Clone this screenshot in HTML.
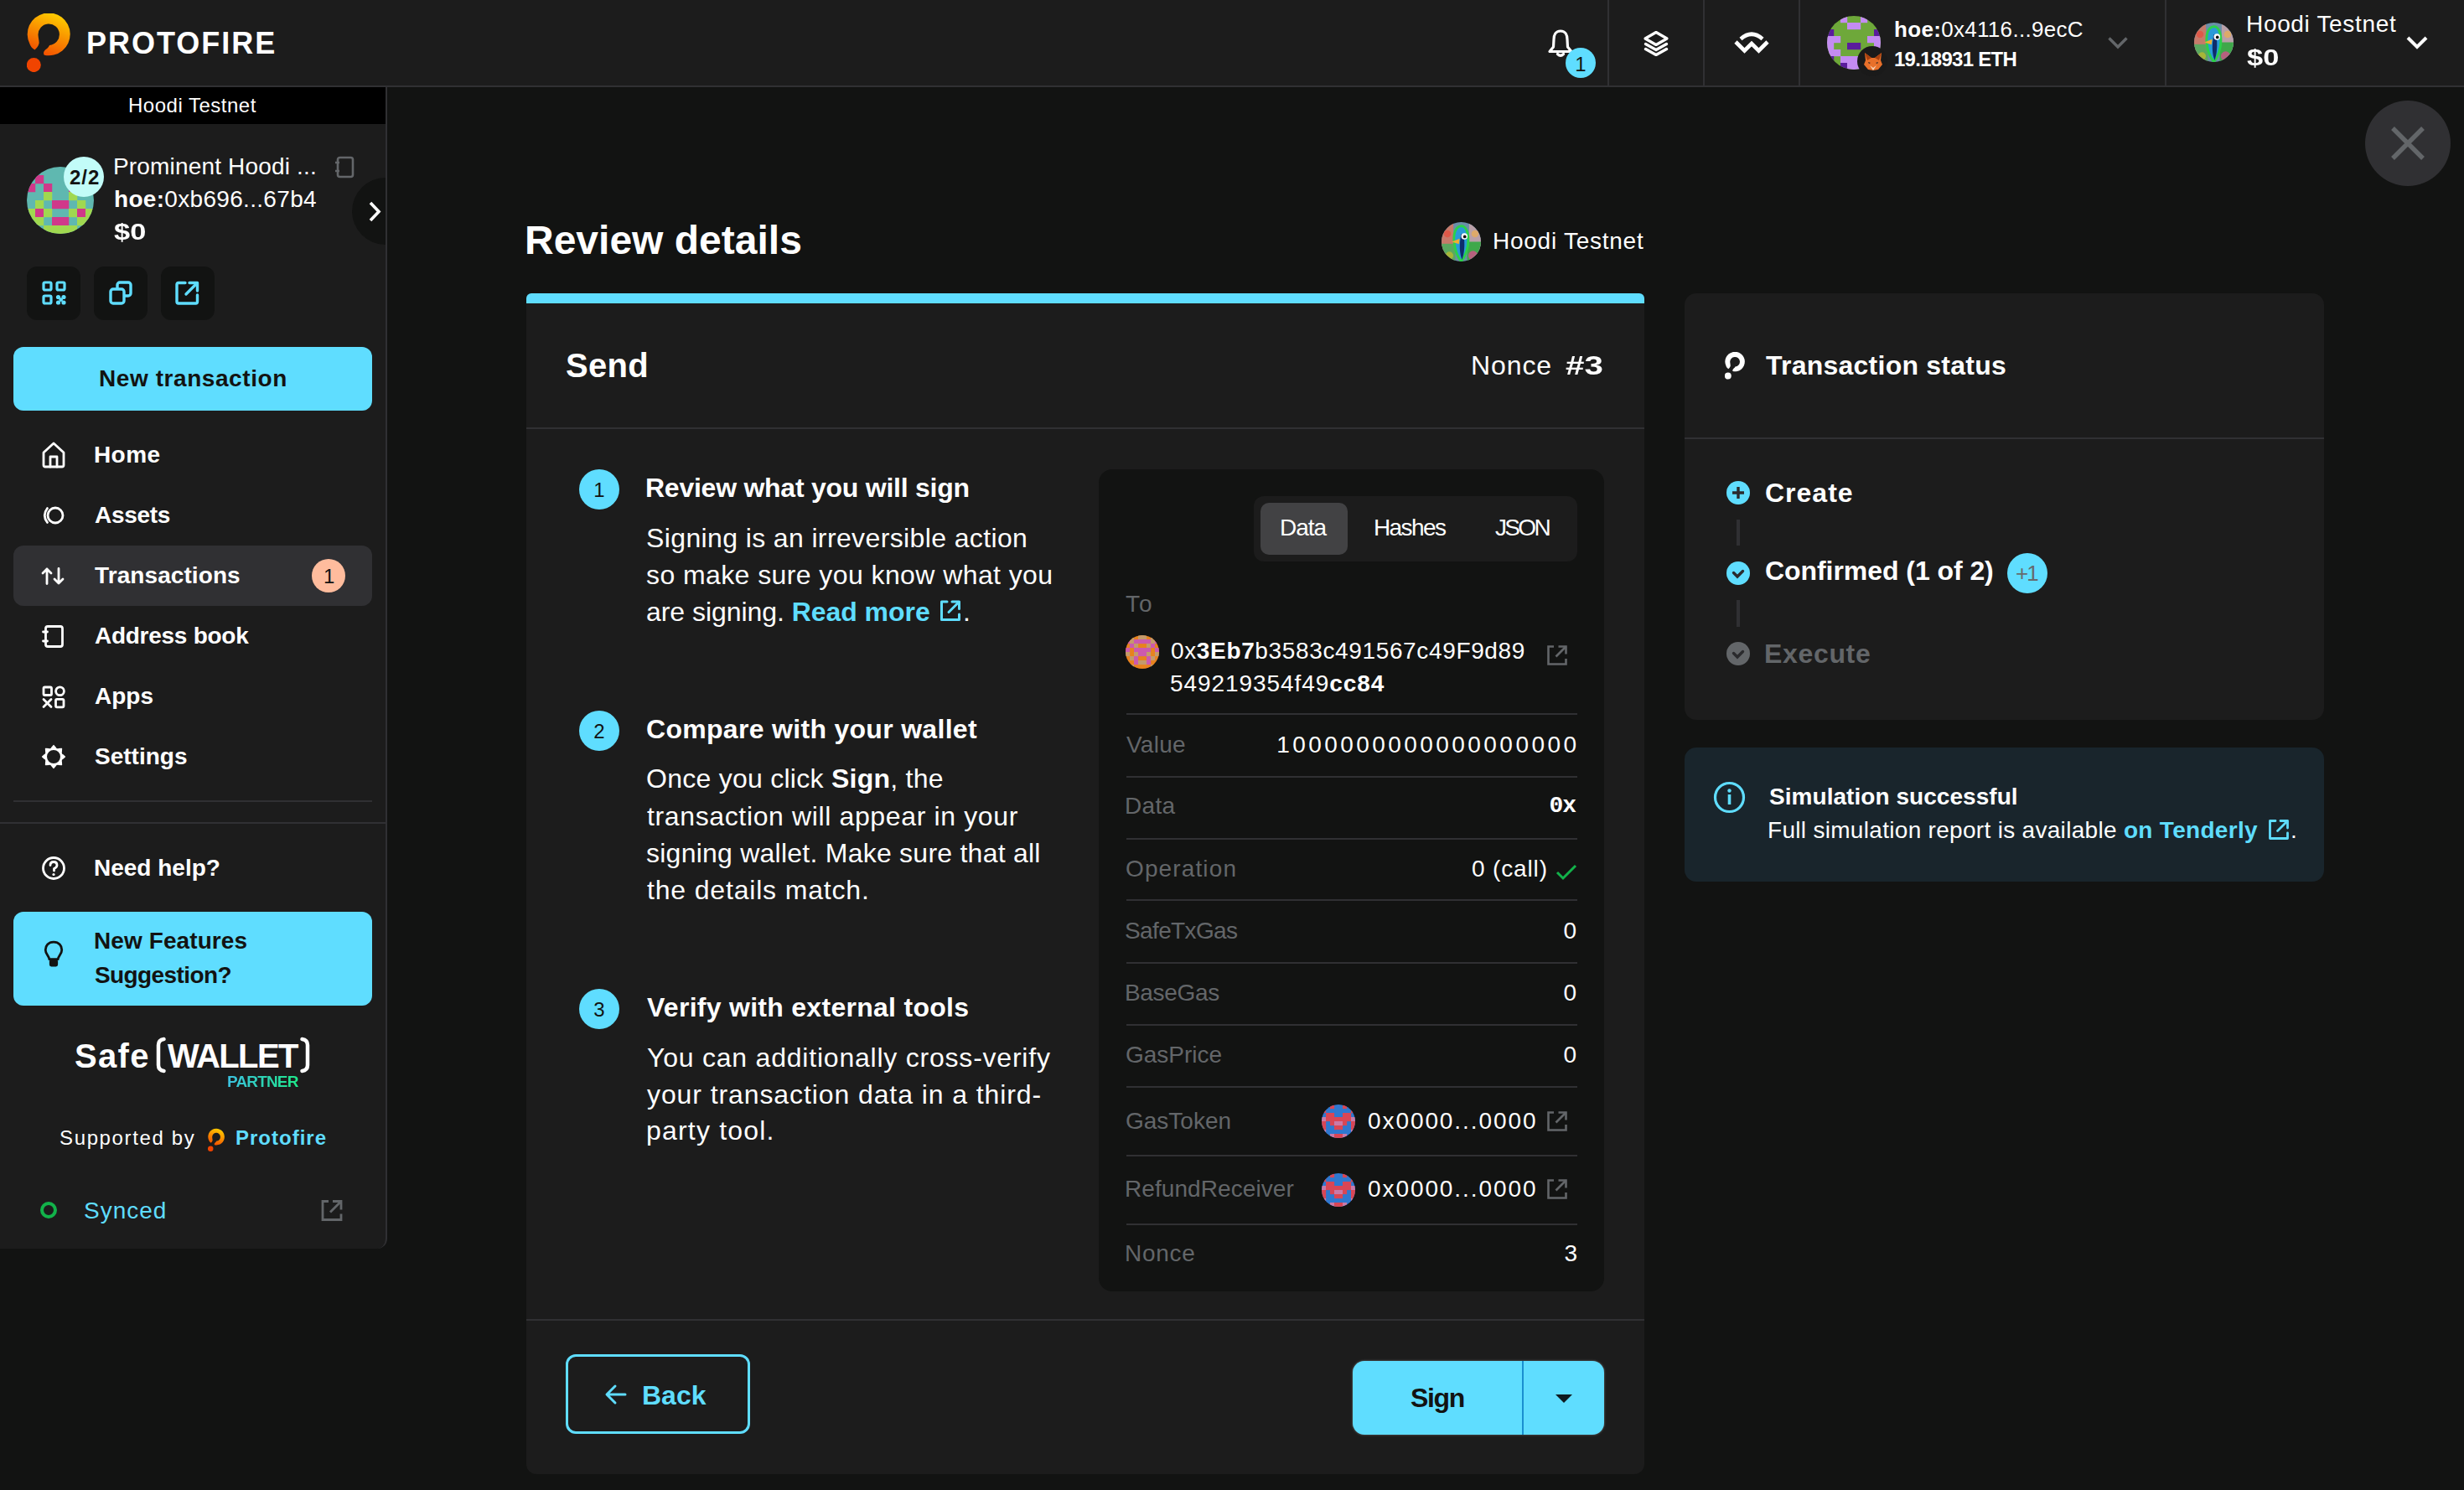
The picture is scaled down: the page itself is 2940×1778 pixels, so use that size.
<!DOCTYPE html>
<html><head><meta charset="utf-8"><title>Review details</title>
<style>
html,body{margin:0;padding:0;width:2940px;height:1778px;overflow:hidden;background:#121312;}
body{position:relative;font-family:"Liberation Sans",sans-serif;color:#fff;}
</style></head><body>
<div style="position:absolute;left:0px;top:0px;width:2940px;height:1778px;background:#121312;"></div>
<div style="position:absolute;left:0px;top:0px;width:2940px;height:102px;background:#1c1c1c;"></div>
<div style="position:absolute;left:0px;top:102px;width:2940px;height:2px;background:#303033;"></div>
<svg style="position:absolute;left:32px;top:16px;" width="52" height="70" viewBox="0 0 52 70"><defs><linearGradient id="pg" x1="0.7" y1="0" x2="0.3" y2="1"><stop offset="0" stop-color="#FFD000"/><stop offset="1" stop-color="#F24A00"/></linearGradient></defs><path d="M9.4 43.5 C6.5 41.5 4.5 39.5 3.5 36.5 A25.5 25.5 0 1 1 20.9 49.8 C19.5 48.5 19.8 45.5 22 43.5 C23.8 42 25.5 41 27.1 37.9 A12.7 12.7 0 1 0 13.55 26.3 C13.8 30 15 33.6 14.5 36 C13.8 39 11.5 42 9.4 43.5 Z" fill="url(#pg)"/><circle cx="8.3" cy="61.6" r="8.5" fill="#F04400"/></svg>
<div id="h_proto" style="position:absolute;top:34px;font-family:'Liberation Sans', sans-serif;font-size:36px;line-height:36px;font-weight:700;color:#fff;white-space:nowrap;letter-spacing:2.000px;left:103.00px;"><span style="font-weight:700;">PROTOFIRE</span></div>
<div style="position:absolute;left:1918px;top:0px;width:2px;height:102px;background:#303033;"></div>
<div style="position:absolute;left:2032px;top:0px;width:2px;height:102px;background:#303033;"></div>
<div style="position:absolute;left:2146px;top:0px;width:2px;height:102px;background:#303033;"></div>
<div style="position:absolute;left:2583px;top:0px;width:2px;height:102px;background:#303033;"></div>
<svg style="position:absolute;left:1846px;top:34px;" width="32" height="34" viewBox="0 0 32 34"><path d="M16 3 C10 3 8 8 8 13 L7.5 22 L3 27.5 L29 27.5 L24.5 22 L24 13 C24 8 22 3 16 3 Z" fill="none" stroke="#fff" stroke-width="3.2" stroke-linejoin="round"/><path d="M12.5 30.5 Q16 34 19.5 30.5" fill="none" stroke="#fff" stroke-width="3.2" stroke-linecap="round"/></svg>
<div style="position:absolute;left:1868px;top:57px;width:36px;height:36px;border-radius:50%;background:#5FDDFF;"></div>
<div id="h_bell1" style="position:absolute;top:65px;font-family:'Liberation Sans', sans-serif;font-size:24px;line-height:24px;font-weight:400;color:#121312;white-space:nowrap;letter-spacing:0.000px;left:1586.00px;width:600px;text-align:center;"><span style="font-weight:400;">1</span></div>
<svg style="position:absolute;left:1960px;top:36px;" width="32" height="31" viewBox="0 0 32 31"><path d="M16 2.5 L29 10 L16 17.5 L3 10 Z" fill="none" stroke="#fff" stroke-width="3.2" stroke-linejoin="round"/><path d="M3.5 16.5 L16 23.5 L28.5 16.5" fill="none" stroke="#fff" stroke-width="3.4" stroke-linejoin="round" stroke-linecap="round"/><path d="M3.5 22.5 L16 29.5 L28.5 22.5" fill="none" stroke="#fff" stroke-width="3.4" stroke-linejoin="round" stroke-linecap="round"/></svg>
<svg style="position:absolute;left:2068px;top:37px;" width="44" height="28" viewBox="0 0 44 28"><path d="M9 9.5 Q22 -2 35 9.5" fill="none" stroke="#fff" stroke-width="4.6" stroke-linecap="butt"/><path d="M3 13 L13.5 23.5 L22 15 L30.5 23.5 L41 13" fill="none" stroke="#fff" stroke-width="4.6" stroke-linejoin="miter"/></svg>
<svg style="position:absolute;left:2180px;top:19px;" width="64" height="64" viewBox="0 0 100 100"><defs><clipPath id="c2180_19"><circle cx="50" cy="50" r="50"/></clipPath></defs><g clip-path="url(#c2180_19)"><rect x="0" y="0" width="100" height="100" fill="#6ea83a"/><rect x="25.00" y="0.00" width="12.80" height="12.80" fill="#c48cf2"/><rect x="62.50" y="0.00" width="12.80" height="12.80" fill="#c48cf2"/><rect x="37.50" y="12.50" width="12.80" height="12.80" fill="#c48cf2"/><rect x="50.00" y="12.50" width="12.80" height="12.80" fill="#c48cf2"/><rect x="0.00" y="25.00" width="12.80" height="12.80" fill="#5a1c9c"/><rect x="87.50" y="25.00" width="12.80" height="12.80" fill="#5a1c9c"/><rect x="0.00" y="37.50" width="12.80" height="12.80" fill="#c48cf2"/><rect x="12.50" y="37.50" width="12.80" height="12.80" fill="#c48cf2"/><rect x="75.00" y="37.50" width="12.80" height="12.80" fill="#c48cf2"/><rect x="87.50" y="37.50" width="12.80" height="12.80" fill="#c48cf2"/><rect x="0.00" y="50.00" width="12.80" height="12.80" fill="#c48cf2"/><rect x="37.50" y="50.00" width="12.80" height="12.80" fill="#5a1c9c"/><rect x="50.00" y="50.00" width="12.80" height="12.80" fill="#5a1c9c"/><rect x="87.50" y="50.00" width="12.80" height="12.80" fill="#c48cf2"/><rect x="0.00" y="62.50" width="12.80" height="12.80" fill="#c48cf2"/><rect x="12.50" y="62.50" width="12.80" height="12.80" fill="#c48cf2"/><rect x="75.00" y="62.50" width="12.80" height="12.80" fill="#c48cf2"/><rect x="87.50" y="62.50" width="12.80" height="12.80" fill="#c48cf2"/><rect x="0.00" y="75.00" width="12.80" height="12.80" fill="#5a1c9c"/><rect x="25.00" y="75.00" width="12.80" height="12.80" fill="#c48cf2"/><rect x="37.50" y="75.00" width="12.80" height="12.80" fill="#c48cf2"/><rect x="50.00" y="75.00" width="12.80" height="12.80" fill="#c48cf2"/><rect x="62.50" y="75.00" width="12.80" height="12.80" fill="#c48cf2"/><rect x="87.50" y="75.00" width="12.80" height="12.80" fill="#5a1c9c"/><rect x="25.00" y="87.50" width="12.80" height="12.80" fill="#5a1c9c"/><rect x="37.50" y="87.50" width="12.80" height="12.80" fill="#c48cf2"/><rect x="50.00" y="87.50" width="12.80" height="12.80" fill="#c48cf2"/><rect x="62.50" y="87.50" width="12.80" height="12.80" fill="#5a1c9c"/></g></svg>
<div style="position:absolute;left:2216px;top:55px;width:36px;height:36px;border-radius:50%;background:#1a1a1a;"></div>
<svg style="position:absolute;left:2222px;top:60px;" width="26" height="26" viewBox="0 0 26 26"><path d="M3 3 L11 9 L15 9 L23 3 L22 12 L24 17 L19 23 L13 24 L7 23 L2 17 L4 12 Z" fill="#e8702a"/><path d="M3 3 L11 9 L6 12 Z M23 3 L15 9 L20 12 Z" fill="#a8400e"/><path d="M9 18 L13 21 L17 18 L13 24 Z" fill="#f5d4b8"/><path d="M7 14 L10 15 L8 16Z M19 14 L16 15 L18 16Z" fill="#222"/></svg>
<div id="h_addr" style="position:absolute;top:22px;font-family:'Liberation Sans', sans-serif;font-size:26px;line-height:26px;font-weight:400;color:#fff;white-space:nowrap;letter-spacing:0.312px;left:2260.00px;"><span style="font-weight:700;">hoe:</span><span style="font-weight:400;">0x4116...9ecC</span></div>
<div id="h_eth" style="position:absolute;top:59px;font-family:'Liberation Sans', sans-serif;font-size:24px;line-height:24px;font-weight:700;color:#fff;white-space:nowrap;letter-spacing:-0.727px;left:2260.00px;"><span style="font-weight:700;">19.18931 ETH</span></div>
<svg style="position:absolute;left:2514px;top:43px;" width="26" height="16" viewBox="0 0 26 16"><path d="M2.5 2.5 L13 13 L23.5 2.5" fill="none" stroke="#636669" stroke-width="3.4"/></svg>
<svg style="position:absolute;left:2618px;top:27px;" width="47" height="47" viewBox="0 0 100 100"><defs><clipPath id="hc2618"><circle cx="50" cy="50" r="50"/></clipPath></defs><g clip-path="url(#hc2618)"><rect width="100" height="100" fill="#6a8fa8"/><rect x="0" y="0" width="30" height="100" fill="#c77a6a"/><rect x="70" y="0" width="30" height="100" fill="#b9a0a8"/><rect x="0" y="55" width="35" height="45" fill="#5aa860"/><rect x="65" y="50" width="35" height="50" fill="#3fa84a"/><circle cx="15" cy="30" r="9" fill="#e74c3c" opacity="0.7"/><circle cx="85" cy="30" r="9" fill="#f5b041" opacity="0.6"/><circle cx="80" cy="85" r="12" fill="#e84393" opacity="0.7"/><circle cx="20" cy="85" r="10" fill="#f1c40f" opacity="0.5"/><path d="M50 10 C34 12 30 32 32 50 C34 72 42 90 50 100 C60 88 68 66 68 45 C68 26 62 10 50 10Z" fill="#2a9ad8" stroke="#2bd14a" stroke-width="6"/><path d="M50 30 C44 60 46 80 52 96 C58 80 60 55 56 32Z" fill="#0d2c6b"/><circle cx="58" cy="36" r="8" fill="#fff"/><circle cx="59" cy="37" r="4" fill="#111"/><path d="M26 50 L46 42 L44 56 Z" fill="#f0b030"/></g></svg>
<div id="h_net" style="position:absolute;top:15px;font-family:'Liberation Sans', sans-serif;font-size:28px;line-height:28px;font-weight:400;color:#fff;white-space:nowrap;letter-spacing:0.667px;left:2680.00px;"><span style="font-weight:400;">Hoodi Testnet</span></div>
<div id="h_usd" style="position:absolute;top:55px;font-family:'Liberation Sans', sans-serif;font-size:28px;line-height:28px;font-weight:700;color:#fff;white-space:nowrap;letter-spacing:0.000px;transform:scaleX(1.2286);transform-origin:0 0;left:2681.00px;"><span style="font-weight:700;">$0</span></div>
<svg style="position:absolute;left:2870px;top:42px;" width="28" height="18" viewBox="0 0 28 18"><path d="M3 3 L14 14 L25 3" fill="none" stroke="#fff" stroke-width="4"/></svg>
<div style="position:absolute;left:0;top:104px;width:460px;height:1386px;background:#1c1c1c;border-right:2px solid #303033;border-radius:0 0 12px 0"></div>
<div style="position:absolute;left:0px;top:104px;width:460px;height:44px;background:#000;"></div>
<div id="s_net" style="position:absolute;top:114px;font-family:'Liberation Sans', sans-serif;font-size:24px;line-height:24px;font-weight:400;color:#fff;white-space:nowrap;letter-spacing:0.500px;left:153.00px;"><span style="font-weight:400;">Hoodi Testnet</span></div>
<svg style="position:absolute;left:32px;top:199px;" width="80" height="80" viewBox="0 0 100 100"><defs><clipPath id="c32_199"><circle cx="50" cy="50" r="50"/></clipPath></defs><g clip-path="url(#c32_199)"><rect x="0" y="0" width="100" height="100" fill="#5fb8b0"/><rect x="12.50" y="12.50" width="12.80" height="12.80" fill="#d0388a"/><rect x="75.00" y="12.50" width="12.80" height="12.80" fill="#d0388a"/><rect x="0.00" y="25.00" width="12.80" height="12.80" fill="#d0388a"/><rect x="25.00" y="25.00" width="12.80" height="12.80" fill="#d0388a"/><rect x="62.50" y="25.00" width="12.80" height="12.80" fill="#d0388a"/><rect x="87.50" y="25.00" width="12.80" height="12.80" fill="#d0388a"/><rect x="25.00" y="37.50" width="12.80" height="12.80" fill="#a0d850"/><rect x="62.50" y="37.50" width="12.80" height="12.80" fill="#a0d850"/><rect x="12.50" y="50.00" width="12.80" height="12.80" fill="#a0d850"/><rect x="37.50" y="50.00" width="12.80" height="12.80" fill="#d0388a"/><rect x="50.00" y="50.00" width="12.80" height="12.80" fill="#d0388a"/><rect x="75.00" y="50.00" width="12.80" height="12.80" fill="#a0d850"/><rect x="0.00" y="62.50" width="12.80" height="12.80" fill="#a0d850"/><rect x="12.50" y="62.50" width="12.80" height="12.80" fill="#d0388a"/><rect x="25.00" y="62.50" width="12.80" height="12.80" fill="#a0d850"/><rect x="62.50" y="62.50" width="12.80" height="12.80" fill="#a0d850"/><rect x="75.00" y="62.50" width="12.80" height="12.80" fill="#d0388a"/><rect x="87.50" y="62.50" width="12.80" height="12.80" fill="#a0d850"/><rect x="0.00" y="75.00" width="12.80" height="12.80" fill="#a0d850"/><rect x="12.50" y="75.00" width="12.80" height="12.80" fill="#a0d850"/><rect x="37.50" y="75.00" width="12.80" height="12.80" fill="#d0388a"/><rect x="50.00" y="75.00" width="12.80" height="12.80" fill="#d0388a"/><rect x="75.00" y="75.00" width="12.80" height="12.80" fill="#a0d850"/><rect x="87.50" y="75.00" width="12.80" height="12.80" fill="#a0d850"/><rect x="25.00" y="87.50" width="12.80" height="12.80" fill="#a0d850"/><rect x="37.50" y="87.50" width="12.80" height="12.80" fill="#a0d850"/><rect x="50.00" y="87.50" width="12.80" height="12.80" fill="#a0d850"/><rect x="62.50" y="87.50" width="12.80" height="12.80" fill="#a0d850"/></g></svg>
<div style="position:absolute;left:76px;top:187px;width:48px;height:48px;border-radius:50%;background:#C2FCF8;"></div>
<div id="s_22" style="position:absolute;top:200px;font-family:'Liberation Sans', sans-serif;font-size:24px;line-height:24px;font-weight:700;color:#121312;white-space:nowrap;letter-spacing:1.000px;left:83.00px;"><span style="font-weight:700;">2/2</span></div>
<div id="s_name" style="position:absolute;top:185px;font-family:'Liberation Sans', sans-serif;font-size:28px;line-height:28px;font-weight:400;color:#fff;white-space:nowrap;letter-spacing:0.167px;left:135.00px;"><span style="font-weight:400;">Prominent Hoodi ...</span></div>
<div id="s_addr" style="position:absolute;top:224px;font-family:'Liberation Sans', sans-serif;font-size:28px;line-height:28px;font-weight:400;color:#fff;white-space:nowrap;letter-spacing:0.312px;left:136.00px;"><span style="font-weight:700;">hoe:</span><span style="font-weight:400;">0xb696...67b4</span></div>
<div id="s_usd" style="position:absolute;top:263px;font-family:'Liberation Sans', sans-serif;font-size:28px;line-height:28px;font-weight:700;color:#fff;white-space:nowrap;letter-spacing:0.000px;transform:scaleX(1.2286);transform-origin:0 0;left:136.00px;"><span style="font-weight:700;">$0</span></div>
<svg style="position:absolute;left:397px;top:185px;" width="28" height="30" viewBox="0 0 28 30"><rect x="6" y="3" width="18" height="23" rx="2.5" fill="none" stroke="#636669" stroke-width="2.6"/><path d="M3 9 H8 M3 19 H8" stroke="#636669" stroke-width="2.6"/></svg>
<div style="position:absolute;left:420px;top:212px;width:40px;height:80px;overflow:hidden"><div style="width:80px;height:80px;border-radius:50%;background:#121312"></div></div>
<svg style="position:absolute;left:436px;top:238px;" width="24" height="30" viewBox="0 0 24 30"><path d="M6 4 L16 14.5 L6 25" fill="none" stroke="#fff" stroke-width="3.6"/></svg>
<div style="position:absolute;left:32px;top:318px;width:64px;height:64px;background:#121312;border-radius:12px;"></div>
<div style="position:absolute;left:112px;top:318px;width:64px;height:64px;background:#121312;border-radius:12px;"></div>
<div style="position:absolute;left:192px;top:318px;width:64px;height:64px;background:#121312;border-radius:12px;"></div>
<svg style="position:absolute;left:50px;top:335px;" width="30" height="30" viewBox="0 0 30 30"><g fill="none" stroke="#5FDDFF" stroke-width="3.2"><rect x="2" y="2" width="9" height="9" rx="1.5"/><rect x="18" y="2" width="9" height="9" rx="1.5"/><rect x="2" y="18" width="9" height="9" rx="1.5"/></g><g fill="#5FDDFF"><circle cx="19.5" cy="19.5" r="2.6"/><circle cx="26" cy="19.5" r="2.6"/><circle cx="19.5" cy="26" r="2.6"/><circle cx="26" cy="26" r="2.6"/><circle cx="22.7" cy="22.7" r="2.4"/></g></svg>
<svg style="position:absolute;left:130px;top:335px;" width="30" height="30" viewBox="0 0 30 30"><g fill="none" stroke="#5FDDFF" stroke-width="3.4" stroke-linejoin="round"><rect x="10" y="2" width="16" height="16" rx="3"/><rect x="2" y="10" width="16" height="17" rx="3" fill="#121312"/></g></svg>
<svg style="position:absolute;left:209px;top:335px;" width="30" height="30" viewBox="0 0 30 30"><g fill="none" stroke="#5FDDFF" stroke-width="3.4" stroke-linecap="round" stroke-linejoin="round"><path d="M12 2.5 H4 Q2 2.5 2 4.5 V25 Q2 27 4 27 H24.5 Q26.5 27 26.5 25 V17"/><path d="M17 2.5 H26.5 V12"/><path d="M26 3 L13 16"/></g></svg>
<div style="position:absolute;left:16px;top:414px;width:428px;height:76px;background:#5FDDFF;border-radius:12px;"></div>
<div id="s_newtx" style="position:absolute;top:438px;font-family:'Liberation Sans', sans-serif;font-size:28px;line-height:28px;font-weight:700;color:#121312;white-space:nowrap;letter-spacing:0.571px;left:118.00px;"><span style="font-weight:700;">New transaction</span></div>
<div style="position:absolute;left:16px;top:651px;width:428px;height:72px;background:#303033;border-radius:12px;"></div>
<div id="nav0" style="position:absolute;top:529px;font-family:'Liberation Sans', sans-serif;font-size:28px;line-height:28px;font-weight:700;color:#fff;white-space:nowrap;letter-spacing:0.403px;left:112.00px;"><span style="font-weight:700;">Home</span></div>
<div id="nav1" style="position:absolute;top:601px;font-family:'Liberation Sans', sans-serif;font-size:28px;line-height:28px;font-weight:700;color:#fff;white-space:nowrap;letter-spacing:-0.300px;left:113.00px;"><span style="font-weight:700;">Assets</span></div>
<div id="nav2" style="position:absolute;top:673px;font-family:'Liberation Sans', sans-serif;font-size:28px;line-height:28px;font-weight:700;color:#fff;white-space:nowrap;letter-spacing:0.087px;left:113.00px;"><span style="font-weight:700;">Transactions</span></div>
<div id="nav3" style="position:absolute;top:745px;font-family:'Liberation Sans', sans-serif;font-size:28px;line-height:28px;font-weight:700;color:#fff;white-space:nowrap;letter-spacing:-0.273px;left:113.00px;"><span style="font-weight:700;">Address book</span></div>
<div id="nav4" style="position:absolute;top:817px;font-family:'Liberation Sans', sans-serif;font-size:28px;line-height:28px;font-weight:700;color:#fff;white-space:nowrap;letter-spacing:0.000px;left:113.00px;"><span style="font-weight:700;">Apps</span></div>
<div id="nav5" style="position:absolute;top:889px;font-family:'Liberation Sans', sans-serif;font-size:28px;line-height:28px;font-weight:700;color:#fff;white-space:nowrap;letter-spacing:0.000px;left:113.00px;"><span style="font-weight:700;">Settings</span></div>
<svg style="position:absolute;left:48px;top:526px;" width="32" height="34" viewBox="0 0 32 34"><path d="M4 14 L16 3 L28 14 V29 Q28 31 26 31 H6 Q4 31 4 29 Z" fill="none" stroke="#fff" stroke-width="2.8" stroke-linejoin="round" stroke-linecap="round"/><path d="M12 31 V19 H20 V31" fill="none" stroke="#fff" stroke-width="2.8" stroke-linejoin="round" stroke-linecap="round"/></svg>
<svg style="position:absolute;left:48px;top:602px;" width="32" height="26" viewBox="0 0 32 26"><circle cx="18" cy="13" r="9" fill="none" stroke="#fff" stroke-width="2.8" stroke-linejoin="round" stroke-linecap="round"/><path d="M8.5 4.5 Q2 13 8.5 21.5" fill="none" stroke="#fff" stroke-width="2.8" stroke-linejoin="round" stroke-linecap="round"/></svg>
<svg style="position:absolute;left:48px;top:674px;" width="32" height="26" viewBox="0 0 32 26"><path d="M8 22.5 V5 M3 10 L8 5 L13 10" fill="none" stroke="#fff" stroke-width="2.8" stroke-linejoin="round" stroke-linecap="round"/><path d="M22 4.5 V22 M17 17 L22 22 L27 17" fill="none" stroke="#fff" stroke-width="2.8" stroke-linejoin="round" stroke-linecap="round"/></svg>
<svg style="position:absolute;left:48px;top:744px;" width="32" height="32" viewBox="0 0 32 32"><rect x="6.5" y="3.5" width="20" height="24" rx="2.5" fill="none" stroke="#fff" stroke-width="2.8" stroke-linejoin="round" stroke-linecap="round"/><path d="M3.5 10 H8.5 M3.5 21 H8.5" fill="none" stroke="#fff" stroke-width="2.8" stroke-linejoin="round" stroke-linecap="round"/></svg>
<svg style="position:absolute;left:48px;top:816px;" width="32" height="32" viewBox="0 0 32 32"><rect x="4" y="4" width="9.5" height="9.5" rx="1.5" fill="none" stroke="#fff" stroke-width="2.8" stroke-linejoin="round" stroke-linecap="round"/><circle cx="23.5" cy="8.8" r="4.9" fill="none" stroke="#fff" stroke-width="2.8" stroke-linejoin="round" stroke-linecap="round"/><path d="M4 18.5 L13 27.5 M13 18.5 L4 27.5" fill="none" stroke="#fff" stroke-width="2.8" stroke-linejoin="round" stroke-linecap="round"/><rect x="18.5" y="18.3" width="9.5" height="9.5" rx="1.5" fill="none" stroke="#fff" stroke-width="2.8" stroke-linejoin="round" stroke-linecap="round"/></svg>
<svg style="position:absolute;left:48px;top:887px;" width="32" height="32" viewBox="0 0 32 32"><circle cx="16" cy="16" r="9.4" fill="none" stroke="#fff" stroke-width="2.8"/><path d="M16.00 2.60 L18.40 5.40 L13.60 5.40 Z M25.48 6.52 L25.19 10.20 L21.80 6.81 Z M29.40 16.00 L26.60 18.40 L26.60 13.60 Z M25.48 25.48 L21.80 25.19 L25.19 21.80 Z M16.00 29.40 L13.60 26.60 L18.40 26.60 Z M6.52 25.48 L6.81 21.80 L10.20 25.19 Z M2.60 16.00 L5.40 13.60 L5.40 18.40 Z M6.52 6.52 L10.20 6.81 L6.81 10.20 Z" fill="#fff" stroke="#fff" stroke-width="1.4" stroke-linejoin="round"/></svg>
<div style="position:absolute;left:372px;top:667px;width:40px;height:40px;border-radius:50%;background:#FFBC9D;"></div>
<div id="nav_badge" style="position:absolute;top:676px;font-family:'Liberation Sans', sans-serif;font-size:24px;line-height:24px;font-weight:400;color:#121312;white-space:nowrap;letter-spacing:0.000px;left:386.00px;"><span style="font-weight:400;">1</span></div>
<div style="position:absolute;left:16px;top:955px;width:428px;height:2px;background:#303033;"></div>
<div style="position:absolute;left:0px;top:981px;width:460px;height:2px;background:#303033;"></div>
<svg style="position:absolute;left:48px;top:1020px;" width="32" height="32" viewBox="0 0 32 32"><circle cx="16" cy="16" r="12.5" fill="none" stroke="#fff" stroke-width="2.8" stroke-linejoin="round" stroke-linecap="round"/><path d="M12 12.5 Q12 8.5 16 8.5 Q20 8.5 20 12.5 Q20 15 16.5 16.5 V19" fill="none" stroke="#fff" stroke-width="2.8" stroke-linejoin="round" stroke-linecap="round"/><circle cx="16" cy="23.5" r="1.6" fill="#fff"/></svg>
<div id="s_help" style="position:absolute;top:1022px;font-family:'Liberation Sans', sans-serif;font-size:28px;line-height:28px;font-weight:700;color:#fff;white-space:nowrap;letter-spacing:0.000px;left:112.00px;"><span style="font-weight:700;">Need help?</span></div>
<div style="position:absolute;left:16px;top:1088px;width:428px;height:112px;background:#5FDDFF;border-radius:12px;"></div>
<svg style="position:absolute;left:51px;top:1121px;" width="26" height="36" viewBox="0 0 28 38"><path d="M14 3 C7 3 3.5 8 3.5 13 C3.5 18 7.5 20.5 8.5 25 H19.5 C20.5 20.5 24.5 18 24.5 13 C24.5 8 21 3 14 3 Z" fill="none" stroke="#121312" stroke-width="3"/><rect x="8.5" y="25.5" width="11" height="9" rx="2.5" fill="#121312"/></svg>
<div id="s_feat1" style="position:absolute;top:1109px;font-family:'Liberation Sans', sans-serif;font-size:28px;line-height:28px;font-weight:700;color:#121312;white-space:nowrap;letter-spacing:0.091px;left:112.00px;"><span style="font-weight:700;">New Features</span></div>
<div id="s_feat2" style="position:absolute;top:1150px;font-family:'Liberation Sans', sans-serif;font-size:28px;line-height:28px;font-weight:700;color:#121312;white-space:nowrap;letter-spacing:-0.600px;left:113.00px;"><span style="font-weight:700;">Suggestion?</span></div>
<div id="s_safe" style="position:absolute;top:1240px;font-family:'Liberation Sans', sans-serif;font-size:40px;line-height:40px;font-weight:700;color:#fff;white-space:nowrap;letter-spacing:1.333px;left:89.00px;"><span style="font-weight:700;">Safe</span></div>
<svg style="position:absolute;left:184px;top:1237px;" width="16" height="44" viewBox="0 0 16 44"><path d="M11.5 3 Q5 4 5 10 V34 Q5 40 11.5 41" fill="none" stroke="#fff" stroke-width="4.5" stroke-linecap="round"/></svg>
<div id="s_wallet" style="position:absolute;top:1240px;font-family:'Liberation Sans', sans-serif;font-size:40px;line-height:40px;font-weight:700;color:#fff;white-space:nowrap;letter-spacing:-1.600px;left:200.00px;"><span style="font-weight:700;">WALLET</span></div>
<svg style="position:absolute;left:356px;top:1237px;" width="16" height="44" viewBox="0 0 16 44"><path d="M4.5 3 Q11 4 11 10 V34 Q11 40 4.5 41" fill="none" stroke="#fff" stroke-width="4.5" stroke-linecap="round"/></svg>
<div id="s_partner" style="position:absolute;top:1281px;font-family:'Liberation Sans', sans-serif;font-size:19px;line-height:19px;font-weight:700;color:#29C47A;white-space:nowrap;letter-spacing:-0.834px;background:linear-gradient(90deg,#3cc0e0,#1ee88a);-webkit-background-clip:text;background-clip:text;-webkit-text-fill-color:transparent;left:271.00px;"><span style="font-weight:700;">PARTNER</span></div>
<div id="s_supp" style="position:absolute;top:1346px;font-family:'Liberation Sans', sans-serif;font-size:24px;line-height:24px;font-weight:400;color:#fff;white-space:nowrap;letter-spacing:1.636px;left:71.00px;"><span style="font-weight:400;">Supported by</span></div>
<svg style="position:absolute;left:248px;top:1346px;" width="20" height="29" viewBox="0 0 52 70"><defs><linearGradient id="pg2" x1="0.7" y1="0" x2="0.3" y2="1"><stop offset="0" stop-color="#FFD000"/><stop offset="1" stop-color="#F24A00"/></linearGradient></defs><path d="M9.4 43.5 C6.5 41.5 4.5 39.5 3.5 36.5 A25.5 25.5 0 1 1 20.9 49.8 C19.5 48.5 19.8 45.5 22 43.5 C23.8 42 25.5 41 27.1 37.9 A12.7 12.7 0 1 0 13.55 26.3 C13.8 30 15 33.6 14.5 36 C13.8 39 11.5 42 9.4 43.5 Z" fill="url(#pg2)"/><circle cx="8.3" cy="61.6" r="8.5" fill="#F04400"/></svg>
<div id="s_pf" style="position:absolute;top:1346px;font-family:'Liberation Sans', sans-serif;font-size:24px;line-height:24px;font-weight:700;color:#5FDDFF;white-space:nowrap;letter-spacing:1.000px;left:281.00px;"><span style="font-weight:700;">Protofire</span></div>
<div style="position:absolute;left:48px;top:1434px;width:20px;height:20px;border-radius:50%;background:transparent;box-sizing:border-box;border:4px solid #12B24A;"></div>
<div id="s_sync" style="position:absolute;top:1431px;font-family:'Liberation Sans', sans-serif;font-size:28px;line-height:28px;font-weight:400;color:#5FDDFF;white-space:nowrap;letter-spacing:1.000px;left:100.00px;"><span style="font-weight:400;">Synced</span></div>
<svg style="position:absolute;left:381px;top:1430px;" width="30" height="30" viewBox="0 0 30 30"><g fill="none" stroke="#636669" stroke-width="2.8"><path d="M11 3.5 H4 V25.5 H26 V18.5"/><path d="M16 3.5 H26 V13.5"/><path d="M26 3.5 L13 16.5"/></g></svg>
<div style="position:absolute;left:2822px;top:120px;width:102px;height:102px;border-radius:50%;background:#303033;"></div>
<svg style="position:absolute;left:2850px;top:148px;" width="46" height="46" viewBox="0 0 46 46"><path d="M5 5 L41 41 M41 5 L5 41" stroke="#636669" stroke-width="5.4"/></svg>
<div id="m_title" style="position:absolute;top:263px;font-family:'Liberation Sans', sans-serif;font-size:48px;line-height:48px;font-weight:700;color:#fff;white-space:nowrap;letter-spacing:0.000px;left:626.00px;"><span style="font-weight:700;">Review details</span></div>
<svg style="position:absolute;left:1720px;top:265px;" width="47" height="47" viewBox="0 0 100 100"><defs><clipPath id="hc1720"><circle cx="50" cy="50" r="50"/></clipPath></defs><g clip-path="url(#hc1720)"><rect width="100" height="100" fill="#6a8fa8"/><rect x="0" y="0" width="30" height="100" fill="#c77a6a"/><rect x="70" y="0" width="30" height="100" fill="#b9a0a8"/><rect x="0" y="55" width="35" height="45" fill="#5aa860"/><rect x="65" y="50" width="35" height="50" fill="#3fa84a"/><circle cx="15" cy="30" r="9" fill="#e74c3c" opacity="0.7"/><circle cx="85" cy="30" r="9" fill="#f5b041" opacity="0.6"/><circle cx="80" cy="85" r="12" fill="#e84393" opacity="0.7"/><circle cx="20" cy="85" r="10" fill="#f1c40f" opacity="0.5"/><path d="M50 10 C34 12 30 32 32 50 C34 72 42 90 50 100 C60 88 68 66 68 45 C68 26 62 10 50 10Z" fill="#2a9ad8" stroke="#2bd14a" stroke-width="6"/><path d="M50 30 C44 60 46 80 52 96 C58 80 60 55 56 32Z" fill="#0d2c6b"/><circle cx="58" cy="36" r="8" fill="#fff"/><circle cx="59" cy="37" r="4" fill="#111"/><path d="M26 50 L46 42 L44 56 Z" fill="#f0b030"/></g></svg>
<div id="m_net" style="position:absolute;top:274px;font-family:'Liberation Sans', sans-serif;font-size:28px;line-height:28px;font-weight:400;color:#fff;white-space:nowrap;letter-spacing:0.750px;left:1781.00px;"><span style="font-weight:400;">Hoodi Testnet</span></div>
<div style="position:absolute;left:628px;top:350px;width:1334px;height:16px;background:#5FDDFF;border-radius:6px 6px 0 0;"></div>
<div style="position:absolute;left:628px;top:362px;width:1334px;height:1397px;background:#1c1c1c;border-radius:0 0 12px 12px;"></div>
<div id="m_send" style="position:absolute;top:416px;font-family:'Liberation Sans', sans-serif;font-size:40px;line-height:40px;font-weight:700;color:#fff;white-space:nowrap;letter-spacing:0.333px;left:675.00px;"><span style="font-weight:700;">Send</span></div>
<div id="m_nonce" style="position:absolute;top:420px;font-family:'Liberation Sans', sans-serif;font-size:32px;line-height:32px;font-weight:400;color:#fff;white-space:nowrap;letter-spacing:0.875px;left:1755.12px;"><span style="font-weight:400;">Nonce</span></div>
<div id="m_nonce3" style="position:absolute;top:420px;font-family:'Liberation Sans', sans-serif;font-size:32px;line-height:32px;font-weight:700;color:#fff;white-space:nowrap;letter-spacing:0.000px;transform:scaleX(1.2577);transform-origin:0 0;left:1868.00px;"><span style="font-weight:700;">#3</span></div>
<div style="position:absolute;left:628px;top:510px;width:1334px;height:2px;background:#303033;"></div>
<div style="position:absolute;left:691px;top:560px;width:48px;height:48px;border-radius:50%;background:#5FDDFF;"></div>
<div id="st_n0" style="position:absolute;top:573px;font-family:'Liberation Sans', sans-serif;font-size:24px;line-height:24px;font-weight:400;color:#121312;white-space:nowrap;letter-spacing:0.000px;left:415.00px;width:600px;text-align:center;"><span style="font-weight:400;">1</span></div>
<div style="position:absolute;left:691px;top:848px;width:48px;height:48px;border-radius:50%;background:#5FDDFF;"></div>
<div id="st_n1" style="position:absolute;top:861px;font-family:'Liberation Sans', sans-serif;font-size:24px;line-height:24px;font-weight:400;color:#121312;white-space:nowrap;letter-spacing:0.000px;left:415.00px;width:600px;text-align:center;"><span style="font-weight:400;">2</span></div>
<div style="position:absolute;left:691px;top:1180px;width:48px;height:48px;border-radius:50%;background:#5FDDFF;"></div>
<div id="st_n2" style="position:absolute;top:1193px;font-family:'Liberation Sans', sans-serif;font-size:24px;line-height:24px;font-weight:400;color:#121312;white-space:nowrap;letter-spacing:0.000px;left:415.00px;width:600px;text-align:center;"><span style="font-weight:400;">3</span></div>
<div id="st_t0" style="position:absolute;top:566px;font-family:'Liberation Sans', sans-serif;font-size:32px;line-height:32px;font-weight:700;color:#fff;white-space:nowrap;letter-spacing:-0.250px;left:770.00px;"><span style="font-weight:700;">Review what you will sign</span></div>
<div id="st_b0a" style="position:absolute;top:626px;font-family:'Liberation Sans', sans-serif;font-size:32px;line-height:32px;font-weight:400;color:#fff;white-space:nowrap;letter-spacing:0.375px;left:771.00px;"><span style="font-weight:400;">Signing is an irreversible action</span></div>
<div id="st_b0b" style="position:absolute;top:670px;font-family:'Liberation Sans', sans-serif;font-size:32px;line-height:32px;font-weight:400;color:#fff;white-space:nowrap;letter-spacing:0.414px;left:771.00px;"><span style="font-weight:400;">so make sure you know what you</span></div>
<div id="st_b0c" style="position:absolute;top:714px;font-family:'Liberation Sans', sans-serif;font-size:32px;line-height:32px;font-weight:400;color:#fff;white-space:nowrap;letter-spacing:-0.048px;left:771.00px;"><span style="font-weight:400;">are signing. </span><span style="font-weight:700;color:#5FDDFF;">Read more</span></div>
<svg style="position:absolute;left:1120px;top:715px;" width="28" height="28" viewBox="0 0 28 28"><g fill="none" stroke="#5FDDFF" stroke-width="3" stroke-linecap="round" stroke-linejoin="round"><path d="M10 3 H3.5 V24.5 H24.5 V18"/><path d="M16 3 H24.5 V11.5"/><path d="M24 3.5 L12 15.5"/></g></svg>
<div id="st_b0d" style="position:absolute;top:714px;font-family:'Liberation Sans', sans-serif;font-size:32px;line-height:32px;font-weight:400;color:#fff;white-space:nowrap;letter-spacing:0.000px;left:1149.00px;"><span style="font-weight:400;">.</span></div>
<div id="st_t1" style="position:absolute;top:854px;font-family:'Liberation Sans', sans-serif;font-size:32px;line-height:32px;font-weight:700;color:#fff;white-space:nowrap;letter-spacing:0.304px;left:771.00px;"><span style="font-weight:700;">Compare with your wallet</span></div>
<div id="st_b1a" style="position:absolute;top:913px;font-family:'Liberation Sans', sans-serif;font-size:32px;line-height:32px;font-weight:400;color:#fff;white-space:nowrap;letter-spacing:0.261px;left:771.00px;"><span style="font-weight:400;">Once you click </span><span style="font-weight:700;">Sign</span><span style="font-weight:400;">, the</span></div>
<div id="st_b1b" style="position:absolute;top:958px;font-family:'Liberation Sans', sans-serif;font-size:32px;line-height:32px;font-weight:400;color:#fff;white-space:nowrap;letter-spacing:0.633px;left:772.00px;"><span style="font-weight:400;">transaction will appear in your</span></div>
<div id="st_b1c" style="position:absolute;top:1002px;font-family:'Liberation Sans', sans-serif;font-size:32px;line-height:32px;font-weight:400;color:#fff;white-space:nowrap;letter-spacing:0.242px;left:771.00px;"><span style="font-weight:400;">signing wallet. Make sure that all</span></div>
<div id="st_b1d" style="position:absolute;top:1046px;font-family:'Liberation Sans', sans-serif;font-size:32px;line-height:32px;font-weight:400;color:#fff;white-space:nowrap;letter-spacing:0.824px;left:772.00px;"><span style="font-weight:400;">the details match.</span></div>
<div id="st_t2" style="position:absolute;top:1186px;font-family:'Liberation Sans', sans-serif;font-size:32px;line-height:32px;font-weight:700;color:#fff;white-space:nowrap;letter-spacing:0.280px;left:772.00px;"><span style="font-weight:700;">Verify with external tools</span></div>
<div id="st_b2a" style="position:absolute;top:1246px;font-family:'Liberation Sans', sans-serif;font-size:32px;line-height:32px;font-weight:400;color:#fff;white-space:nowrap;letter-spacing:0.781px;left:772.00px;"><span style="font-weight:400;">You can additionally cross-verify</span></div>
<div id="st_b2b" style="position:absolute;top:1290px;font-family:'Liberation Sans', sans-serif;font-size:32px;line-height:32px;font-weight:400;color:#fff;white-space:nowrap;letter-spacing:0.906px;left:772.00px;"><span style="font-weight:400;">your transaction data in a third-</span></div>
<div id="st_b2c" style="position:absolute;top:1333px;font-family:'Liberation Sans', sans-serif;font-size:32px;line-height:32px;font-weight:400;color:#fff;white-space:nowrap;letter-spacing:1.200px;left:771.00px;"><span style="font-weight:400;">party tool.</span></div>
<div style="position:absolute;left:1311px;top:560px;width:603px;height:981px;background:#121312;border-radius:16px;"></div>
<div style="position:absolute;left:1496px;top:592px;width:386px;height:78px;background:#1c1c1c;border-radius:12px;"></div>
<div style="position:absolute;left:1504px;top:600px;width:104px;height:62px;background:#424244;border-radius:10px;"></div>
<div id="tab_data" style="position:absolute;top:616px;font-family:'Liberation Sans', sans-serif;font-size:28px;line-height:28px;font-weight:400;color:#fff;white-space:nowrap;letter-spacing:-1.000px;left:1527.00px;"><span style="font-weight:400;">Data</span></div>
<div id="tab_hash" style="position:absolute;top:616px;font-family:'Liberation Sans', sans-serif;font-size:28px;line-height:28px;font-weight:400;color:#fff;white-space:nowrap;letter-spacing:-1.600px;left:1639.00px;"><span style="font-weight:400;">Hashes</span></div>
<div id="tab_json" style="position:absolute;top:616px;font-family:'Liberation Sans', sans-serif;font-size:28px;line-height:28px;font-weight:400;color:#fff;white-space:nowrap;letter-spacing:-2.667px;left:1784.00px;"><span style="font-weight:400;">JSON</span></div>
<div id="d_to" style="position:absolute;top:707px;font-family:'Liberation Sans', sans-serif;font-size:28px;line-height:28px;font-weight:400;color:#636669;white-space:nowrap;letter-spacing:2.000px;left:1343.00px;"><span style="font-weight:400;">To</span></div>
<svg style="position:absolute;left:1343px;top:758px;" width="40" height="40" viewBox="0 0 100 100"><defs><clipPath id="c1343_758"><circle cx="50" cy="50" r="50"/></clipPath></defs><g clip-path="url(#c1343_758)"><rect x="0" y="0" width="100" height="100" fill="#E8821E"/><rect x="0.00" y="0.00" width="12.80" height="12.80" fill="#C49A6C"/><rect x="12.50" y="0.00" width="12.80" height="12.80" fill="#C49A6C"/><rect x="37.50" y="0.00" width="12.80" height="12.80" fill="#C49A6C"/><rect x="50.00" y="0.00" width="12.80" height="12.80" fill="#C49A6C"/><rect x="75.00" y="0.00" width="12.80" height="12.80" fill="#C49A6C"/><rect x="87.50" y="0.00" width="12.80" height="12.80" fill="#C49A6C"/><rect x="0.00" y="12.50" width="12.80" height="12.80" fill="#CC5AAE"/><rect x="12.50" y="12.50" width="12.80" height="12.80" fill="#C49A6C"/><rect x="25.00" y="12.50" width="12.80" height="12.80" fill="#CC5AAE"/><rect x="37.50" y="12.50" width="12.80" height="12.80" fill="#CC5AAE"/><rect x="50.00" y="12.50" width="12.80" height="12.80" fill="#CC5AAE"/><rect x="62.50" y="12.50" width="12.80" height="12.80" fill="#CC5AAE"/><rect x="75.00" y="12.50" width="12.80" height="12.80" fill="#C49A6C"/><rect x="87.50" y="12.50" width="12.80" height="12.80" fill="#CC5AAE"/><rect x="12.50" y="25.00" width="12.80" height="12.80" fill="#CC5AAE"/><rect x="25.00" y="25.00" width="12.80" height="12.80" fill="#C49A6C"/><rect x="62.50" y="25.00" width="12.80" height="12.80" fill="#C49A6C"/><rect x="75.00" y="25.00" width="12.80" height="12.80" fill="#CC5AAE"/><rect x="0.00" y="37.50" width="12.80" height="12.80" fill="#CC5AAE"/><rect x="25.00" y="37.50" width="12.80" height="12.80" fill="#CC5AAE"/><rect x="37.50" y="37.50" width="12.80" height="12.80" fill="#CC5AAE"/><rect x="50.00" y="37.50" width="12.80" height="12.80" fill="#CC5AAE"/><rect x="62.50" y="37.50" width="12.80" height="12.80" fill="#CC5AAE"/><rect x="87.50" y="37.50" width="12.80" height="12.80" fill="#CC5AAE"/><rect x="0.00" y="50.00" width="12.80" height="12.80" fill="#C49A6C"/><rect x="25.00" y="50.00" width="12.80" height="12.80" fill="#C49A6C"/><rect x="37.50" y="50.00" width="12.80" height="12.80" fill="#CC5AAE"/><rect x="50.00" y="50.00" width="12.80" height="12.80" fill="#CC5AAE"/><rect x="62.50" y="50.00" width="12.80" height="12.80" fill="#C49A6C"/><rect x="87.50" y="50.00" width="12.80" height="12.80" fill="#C49A6C"/><rect x="12.50" y="62.50" width="12.80" height="12.80" fill="#C49A6C"/><rect x="25.00" y="62.50" width="12.80" height="12.80" fill="#CC5AAE"/><rect x="62.50" y="62.50" width="12.80" height="12.80" fill="#CC5AAE"/><rect x="75.00" y="62.50" width="12.80" height="12.80" fill="#C49A6C"/><rect x="25.00" y="75.00" width="12.80" height="12.80" fill="#CC5AAE"/><rect x="37.50" y="75.00" width="12.80" height="12.80" fill="#C49A6C"/><rect x="50.00" y="75.00" width="12.80" height="12.80" fill="#C49A6C"/><rect x="62.50" y="75.00" width="12.80" height="12.80" fill="#CC5AAE"/><rect x="0.00" y="87.50" width="12.80" height="12.80" fill="#C49A6C"/><rect x="12.50" y="87.50" width="12.80" height="12.80" fill="#C49A6C"/><rect x="75.00" y="87.50" width="12.80" height="12.80" fill="#C49A6C"/><rect x="87.50" y="87.50" width="12.80" height="12.80" fill="#C49A6C"/></g></svg>
<div id="d_a1" style="position:absolute;top:763px;font-family:'Liberation Sans', sans-serif;font-size:28px;line-height:28px;font-weight:400;color:#fff;white-space:nowrap;letter-spacing:0.640px;left:1397.00px;"><span style="font-weight:400;">0x</span><span style="font-weight:700;">3Eb7</span><span style="font-weight:400;">b3583c491567c49F9d89</span></div>
<div id="d_a2" style="position:absolute;top:802px;font-family:'Liberation Sans', sans-serif;font-size:28px;line-height:28px;font-weight:400;color:#fff;white-space:nowrap;letter-spacing:0.933px;left:1396.00px;"><span style="font-weight:400;">549219354f49</span><span style="font-weight:700;">cc84</span></div>
<svg style="position:absolute;left:1844px;top:768px;" width="28" height="28" viewBox="0 0 28 28"><g fill="none" stroke="#636669" stroke-width="2.6"><path d="M10 3.5 H3.5 V24.5 H24.5 V18"/><path d="M15.5 3.5 H24.5 V12.5"/><path d="M24.5 3.5 L12.5 15.5"/></g></svg>
<div style="position:absolute;left:1344px;top:851px;width:538px;height:2px;background:#303033"></div>
<div style="position:absolute;left:1344px;top:925.6px;width:538px;height:2px;background:#303033"></div>
<div style="position:absolute;left:1344px;top:999.7px;width:538px;height:2px;background:#303033"></div>
<div style="position:absolute;left:1344px;top:1073px;width:538px;height:2px;background:#303033"></div>
<div style="position:absolute;left:1344px;top:1147.8px;width:538px;height:2px;background:#303033"></div>
<div style="position:absolute;left:1344px;top:1221.6px;width:538px;height:2px;background:#303033"></div>
<div style="position:absolute;left:1344px;top:1295.8px;width:538px;height:2px;background:#303033"></div>
<div style="position:absolute;left:1344px;top:1378px;width:538px;height:2px;background:#303033"></div>
<div style="position:absolute;left:1344px;top:1459.5px;width:538px;height:2px;background:#303033"></div>
<div id="r_val_l" style="position:absolute;top:875px;font-family:'Liberation Sans', sans-serif;font-size:28px;line-height:28px;font-weight:400;color:#636669;white-space:nowrap;letter-spacing:0.250px;left:1344.00px;"><span style="font-weight:400;">Value</span></div>
<div id="r_data_l" style="position:absolute;top:948px;font-family:'Liberation Sans', sans-serif;font-size:28px;line-height:28px;font-weight:400;color:#636669;white-space:nowrap;letter-spacing:0.333px;left:1342.00px;"><span style="font-weight:400;">Data</span></div>
<div id="r_op_l" style="position:absolute;top:1023px;font-family:'Liberation Sans', sans-serif;font-size:28px;line-height:28px;font-weight:400;color:#636669;white-space:nowrap;letter-spacing:1.125px;left:1343.00px;"><span style="font-weight:400;">Operation</span></div>
<div id="r_stg_l" style="position:absolute;top:1097px;font-family:'Liberation Sans', sans-serif;font-size:28px;line-height:28px;font-weight:400;color:#636669;white-space:nowrap;letter-spacing:-0.625px;left:1342.00px;"><span style="font-weight:400;">SafeTxGas</span></div>
<div id="r_bg_l" style="position:absolute;top:1171px;font-family:'Liberation Sans', sans-serif;font-size:28px;line-height:28px;font-weight:400;color:#636669;white-space:nowrap;letter-spacing:-0.333px;left:1342.00px;"><span style="font-weight:400;">BaseGas</span></div>
<div id="r_gp_l" style="position:absolute;top:1245px;font-family:'Liberation Sans', sans-serif;font-size:28px;line-height:28px;font-weight:400;color:#636669;white-space:nowrap;letter-spacing:0.000px;left:1343.00px;"><span style="font-weight:400;">GasPrice</span></div>
<div id="r_gt_l" style="position:absolute;top:1324px;font-family:'Liberation Sans', sans-serif;font-size:28px;line-height:28px;font-weight:400;color:#636669;white-space:nowrap;letter-spacing:0.000px;left:1343.00px;"><span style="font-weight:400;">GasToken</span></div>
<div id="r_rr_l" style="position:absolute;top:1405px;font-family:'Liberation Sans', sans-serif;font-size:28px;line-height:28px;font-weight:400;color:#636669;white-space:nowrap;letter-spacing:0.077px;left:1342.00px;"><span style="font-weight:400;">RefundReceiver</span></div>
<div id="r_nonce_l" style="position:absolute;top:1482px;font-family:'Liberation Sans', sans-serif;font-size:28px;line-height:28px;font-weight:400;color:#636669;white-space:nowrap;letter-spacing:0.750px;left:1342.00px;"><span style="font-weight:400;">Nonce</span></div>
<div id="r_val_v" style="position:absolute;top:875px;font-family:'Liberation Sans', sans-serif;font-size:28px;line-height:28px;font-weight:400;color:#fff;white-space:nowrap;letter-spacing:3.444px;right:1055.56px;"><span style="font-weight:400;">1000000000000000000</span></div>
<div id="r_data_v" style="position:absolute;top:948px;font-family:'Liberation Mono', monospace;font-size:28px;line-height:28px;font-weight:700;color:#fff;white-space:nowrap;letter-spacing:-1.000px;right:1060.00px;"><span style="font-weight:700;">0x</span></div>
<div id="r_op_v" style="position:absolute;top:1023px;font-family:'Liberation Sans', sans-serif;font-size:28px;line-height:28px;font-weight:400;color:#fff;white-space:nowrap;letter-spacing:0.857px;right:1093.14px;"><span style="font-weight:400;">0 (call)</span></div>
<svg style="position:absolute;left:1855px;top:1030px;" width="28" height="22" viewBox="0 0 28 22"><path d="M3 11 L10 18 L25 3" fill="none" stroke="#12B24A" stroke-width="3"/></svg>
<div id="r_stg_v" style="position:absolute;top:1097px;font-family:'Liberation Sans', sans-serif;font-size:28px;line-height:28px;font-weight:400;color:#fff;white-space:nowrap;letter-spacing:0.000px;right:1059.00px;"><span style="font-weight:400;">0</span></div>
<div id="r_bg_v" style="position:absolute;top:1171px;font-family:'Liberation Sans', sans-serif;font-size:28px;line-height:28px;font-weight:400;color:#fff;white-space:nowrap;letter-spacing:0.000px;right:1059.00px;"><span style="font-weight:400;">0</span></div>
<div id="r_gp_v" style="position:absolute;top:1245px;font-family:'Liberation Sans', sans-serif;font-size:28px;line-height:28px;font-weight:400;color:#fff;white-space:nowrap;letter-spacing:0.000px;right:1059.00px;"><span style="font-weight:400;">0</span></div>
<svg style="position:absolute;left:1577px;top:1318px;" width="40" height="40" viewBox="0 0 100 100"><defs><clipPath id="c1577_1318"><circle cx="50" cy="50" r="50"/></clipPath></defs><g clip-path="url(#c1577_1318)"><rect x="0" y="0" width="100" height="100" fill="#2F78D0"/><rect x="0.00" y="0.00" width="12.80" height="12.80" fill="#D94655"/><rect x="25.00" y="0.00" width="12.80" height="12.80" fill="#D94655"/><rect x="62.50" y="0.00" width="12.80" height="12.80" fill="#D94655"/><rect x="87.50" y="0.00" width="12.80" height="12.80" fill="#D94655"/><rect x="0.00" y="12.50" width="12.80" height="12.80" fill="#D94655"/><rect x="87.50" y="12.50" width="12.80" height="12.80" fill="#D94655"/><rect x="12.50" y="25.00" width="12.80" height="12.80" fill="#D94655"/><rect x="25.00" y="25.00" width="12.80" height="12.80" fill="#D94655"/><rect x="62.50" y="25.00" width="12.80" height="12.80" fill="#D94655"/><rect x="75.00" y="25.00" width="12.80" height="12.80" fill="#D94655"/><rect x="0.00" y="37.50" width="12.80" height="12.80" fill="#C97AA8"/><rect x="12.50" y="37.50" width="12.80" height="12.80" fill="#D94655"/><rect x="25.00" y="37.50" width="12.80" height="12.80" fill="#D94655"/><rect x="37.50" y="37.50" width="12.80" height="12.80" fill="#D94655"/><rect x="50.00" y="37.50" width="12.80" height="12.80" fill="#D94655"/><rect x="62.50" y="37.50" width="12.80" height="12.80" fill="#D94655"/><rect x="75.00" y="37.50" width="12.80" height="12.80" fill="#D94655"/><rect x="87.50" y="37.50" width="12.80" height="12.80" fill="#C97AA8"/><rect x="0.00" y="50.00" width="12.80" height="12.80" fill="#D94655"/><rect x="25.00" y="50.00" width="12.80" height="12.80" fill="#D94655"/><rect x="37.50" y="50.00" width="12.80" height="12.80" fill="#C97AA8"/><rect x="50.00" y="50.00" width="12.80" height="12.80" fill="#C97AA8"/><rect x="62.50" y="50.00" width="12.80" height="12.80" fill="#D94655"/><rect x="87.50" y="50.00" width="12.80" height="12.80" fill="#D94655"/><rect x="0.00" y="62.50" width="12.80" height="12.80" fill="#D94655"/><rect x="37.50" y="62.50" width="12.80" height="12.80" fill="#D94655"/><rect x="50.00" y="62.50" width="12.80" height="12.80" fill="#D94655"/><rect x="87.50" y="62.50" width="12.80" height="12.80" fill="#D94655"/><rect x="0.00" y="75.00" width="12.80" height="12.80" fill="#C97AA8"/><rect x="87.50" y="75.00" width="12.80" height="12.80" fill="#C97AA8"/><rect x="25.00" y="87.50" width="12.80" height="12.80" fill="#C97AA8"/><rect x="37.50" y="87.50" width="12.80" height="12.80" fill="#D94655"/><rect x="50.00" y="87.50" width="12.80" height="12.80" fill="#D94655"/><rect x="62.50" y="87.50" width="12.80" height="12.80" fill="#C97AA8"/></g></svg>
<div id="r_gt_v" style="position:absolute;top:1324px;font-family:'Liberation Sans', sans-serif;font-size:28px;line-height:28px;font-weight:400;color:#fff;white-space:nowrap;letter-spacing:1.917px;left:1632.00px;"><span style="font-weight:400;">0x0000...0000</span></div>
<svg style="position:absolute;left:1844px;top:1324px;" width="28" height="28" viewBox="0 0 28 28"><g fill="none" stroke="#636669" stroke-width="2.6"><path d="M10 3.5 H3.5 V24.5 H24.5 V18"/><path d="M15.5 3.5 H24.5 V12.5"/><path d="M24.5 3.5 L12.5 15.5"/></g></svg>
<svg style="position:absolute;left:1577px;top:1400px;" width="40" height="40" viewBox="0 0 100 100"><defs><clipPath id="c1577_1400"><circle cx="50" cy="50" r="50"/></clipPath></defs><g clip-path="url(#c1577_1400)"><rect x="0" y="0" width="100" height="100" fill="#2F78D0"/><rect x="0.00" y="0.00" width="12.80" height="12.80" fill="#D94655"/><rect x="25.00" y="0.00" width="12.80" height="12.80" fill="#D94655"/><rect x="62.50" y="0.00" width="12.80" height="12.80" fill="#D94655"/><rect x="87.50" y="0.00" width="12.80" height="12.80" fill="#D94655"/><rect x="0.00" y="12.50" width="12.80" height="12.80" fill="#D94655"/><rect x="87.50" y="12.50" width="12.80" height="12.80" fill="#D94655"/><rect x="12.50" y="25.00" width="12.80" height="12.80" fill="#D94655"/><rect x="25.00" y="25.00" width="12.80" height="12.80" fill="#D94655"/><rect x="62.50" y="25.00" width="12.80" height="12.80" fill="#D94655"/><rect x="75.00" y="25.00" width="12.80" height="12.80" fill="#D94655"/><rect x="0.00" y="37.50" width="12.80" height="12.80" fill="#C97AA8"/><rect x="12.50" y="37.50" width="12.80" height="12.80" fill="#D94655"/><rect x="25.00" y="37.50" width="12.80" height="12.80" fill="#D94655"/><rect x="37.50" y="37.50" width="12.80" height="12.80" fill="#D94655"/><rect x="50.00" y="37.50" width="12.80" height="12.80" fill="#D94655"/><rect x="62.50" y="37.50" width="12.80" height="12.80" fill="#D94655"/><rect x="75.00" y="37.50" width="12.80" height="12.80" fill="#D94655"/><rect x="87.50" y="37.50" width="12.80" height="12.80" fill="#C97AA8"/><rect x="0.00" y="50.00" width="12.80" height="12.80" fill="#D94655"/><rect x="25.00" y="50.00" width="12.80" height="12.80" fill="#D94655"/><rect x="37.50" y="50.00" width="12.80" height="12.80" fill="#C97AA8"/><rect x="50.00" y="50.00" width="12.80" height="12.80" fill="#C97AA8"/><rect x="62.50" y="50.00" width="12.80" height="12.80" fill="#D94655"/><rect x="87.50" y="50.00" width="12.80" height="12.80" fill="#D94655"/><rect x="0.00" y="62.50" width="12.80" height="12.80" fill="#D94655"/><rect x="37.50" y="62.50" width="12.80" height="12.80" fill="#D94655"/><rect x="50.00" y="62.50" width="12.80" height="12.80" fill="#D94655"/><rect x="87.50" y="62.50" width="12.80" height="12.80" fill="#D94655"/><rect x="0.00" y="75.00" width="12.80" height="12.80" fill="#C97AA8"/><rect x="87.50" y="75.00" width="12.80" height="12.80" fill="#C97AA8"/><rect x="25.00" y="87.50" width="12.80" height="12.80" fill="#C97AA8"/><rect x="37.50" y="87.50" width="12.80" height="12.80" fill="#D94655"/><rect x="50.00" y="87.50" width="12.80" height="12.80" fill="#D94655"/><rect x="62.50" y="87.50" width="12.80" height="12.80" fill="#C97AA8"/></g></svg>
<div id="r_rr_v" style="position:absolute;top:1405px;font-family:'Liberation Sans', sans-serif;font-size:28px;line-height:28px;font-weight:400;color:#fff;white-space:nowrap;letter-spacing:1.917px;left:1632.00px;"><span style="font-weight:400;">0x0000...0000</span></div>
<svg style="position:absolute;left:1844px;top:1405px;" width="28" height="28" viewBox="0 0 28 28"><g fill="none" stroke="#636669" stroke-width="2.6"><path d="M10 3.5 H3.5 V24.5 H24.5 V18"/><path d="M15.5 3.5 H24.5 V12.5"/><path d="M24.5 3.5 L12.5 15.5"/></g></svg>
<div id="r_nonce_v" style="position:absolute;top:1482px;font-family:'Liberation Sans', sans-serif;font-size:28px;line-height:28px;font-weight:400;color:#fff;white-space:nowrap;letter-spacing:0.000px;right:1058.00px;"><span style="font-weight:400;">3</span></div>
<div style="position:absolute;left:628px;top:1574px;width:1334px;height:2px;background:#303033;"></div>
<div style="position:absolute;left:675px;top:1616px;width:220px;height:95px;box-sizing:border-box;border:3px solid #5FDDFF;border-radius:12px"></div>
<svg style="position:absolute;left:720px;top:1650px;" width="30" height="28" viewBox="0 0 30 28"><path d="M26 14 H5 M14 4 L4 14 L14 24" fill="none" stroke="#5FDDFF" stroke-width="3" stroke-linecap="round" stroke-linejoin="round"/></svg>
<div id="b_back" style="position:absolute;top:1649px;font-family:'Liberation Sans', sans-serif;font-size:32px;line-height:32px;font-weight:700;color:#5FDDFF;white-space:nowrap;letter-spacing:0.000px;left:766.00px;"><span style="font-weight:700;">Back</span></div>
<div style="position:absolute;left:1614px;top:1624px;width:300px;height:88px;background:#5FDDFF;border-radius:14px;box-shadow:0 0 3px rgba(255,255,255,0.35);"></div>
<div style="position:absolute;left:1816px;top:1624px;width:2px;height:88px;background:#1a8fd0;"></div>
<div id="b_sign" style="position:absolute;top:1652px;font-family:'Liberation Sans', sans-serif;font-size:32px;line-height:32px;font-weight:700;color:#121312;white-space:nowrap;letter-spacing:-1.333px;left:1683.00px;"><span style="font-weight:700;">Sign</span></div>
<svg style="position:absolute;left:1854px;top:1661px;" width="24" height="16" viewBox="0 0 24 16"><path d="M2 3 L22 3 L12 13 Z" fill="#0f1a20"/></svg>
<div style="position:absolute;left:2010px;top:350px;width:763px;height:509px;background:#1c1c1c;border-radius:14px;"></div>
<svg style="position:absolute;left:2058px;top:420px;" width="24" height="32.5" viewBox="0 0 52 70"><path d="M9.4 43.5 C6.5 41.5 4.5 39.5 3.5 36.5 A25.5 25.5 0 1 1 20.9 49.8 C19.5 48.5 19.8 45.5 22 43.5 C23.8 42 25.5 41 27.1 37.9 A12.7 12.7 0 1 0 13.55 26.3 C13.8 30 15 33.6 14.5 36 C13.8 39 11.5 42 9.4 43.5 Z" fill="#fff"/><circle cx="8.3" cy="61.6" r="8.5" fill="#fff"/></svg>
<div id="p_title" style="position:absolute;top:420px;font-family:'Liberation Sans', sans-serif;font-size:32px;line-height:32px;font-weight:700;color:#fff;white-space:nowrap;letter-spacing:0.235px;left:2107.00px;"><span style="font-weight:700;">Transaction status</span></div>
<div style="position:absolute;left:2010px;top:522px;width:763px;height:2px;background:#303033;"></div>
<div style="position:absolute;left:2060px;top:574px;width:28px;height:28px;border-radius:50%;background:#5FDDFF;"></div>
<svg style="position:absolute;left:2060px;top:574px;" width="28" height="28" viewBox="0 0 28 28"><path d="M14 7 V21 M7 14 H21" stroke="#2a2a2d" stroke-width="3.4"/></svg>
<div id="p_create" style="position:absolute;top:572px;font-family:'Liberation Sans', sans-serif;font-size:32px;line-height:32px;font-weight:700;color:#fff;white-space:nowrap;letter-spacing:1.000px;left:2106.00px;"><span style="font-weight:700;">Create</span></div>
<div style="position:absolute;left:2072px;top:620px;width:4px;height:31px;background:#303033;"></div>
<div style="position:absolute;left:2060px;top:670px;width:28px;height:28px;border-radius:50%;background:#5FDDFF;"></div>
<svg style="position:absolute;left:2060px;top:670px;" width="28" height="28" viewBox="0 0 28 28"><path d="M8.5 13.5 L13 18 L19.5 11.5" fill="none" stroke="#2a2a2d" stroke-width="3.4" stroke-linecap="round"/></svg>
<div id="p_conf" style="position:absolute;top:665px;font-family:'Liberation Sans', sans-serif;font-size:32px;line-height:32px;font-weight:700;color:#fff;white-space:nowrap;letter-spacing:-0.059px;left:2106.00px;"><span style="font-weight:700;">Confirmed (1 of 2)</span></div>
<div style="position:absolute;left:2395px;top:660px;width:48px;height:48px;border-radius:50%;background:#5FDDFF;"></div>
<div id="p_plus" style="position:absolute;top:671px;font-family:'Liberation Sans', sans-serif;font-size:26px;line-height:26px;font-weight:400;color:#666a6e;white-space:nowrap;letter-spacing:-2.000px;letter-spacing:-2px;left:2405.00px;"><span style="font-weight:400;">+1</span></div>
<div style="position:absolute;left:2072px;top:716px;width:4px;height:32px;background:#303033;"></div>
<div style="position:absolute;left:2060px;top:766px;width:28px;height:28px;border-radius:50%;background:#636669;"></div>
<svg style="position:absolute;left:2060px;top:766px;" width="28" height="28" viewBox="0 0 28 28"><path d="M8.5 13.5 L13 18 L19.5 11.5" fill="none" stroke="#2a2a2d" stroke-width="3.4" stroke-linecap="round"/></svg>
<div id="p_exec" style="position:absolute;top:764px;font-family:'Liberation Sans', sans-serif;font-size:32px;line-height:32px;font-weight:700;color:#636669;white-space:nowrap;letter-spacing:0.667px;left:2105.00px;"><span style="font-weight:700;">Execute</span></div>
<div style="position:absolute;left:2010px;top:892px;width:763px;height:160px;background:#19252C;border-radius:14px;"></div>
<svg style="position:absolute;left:2043px;top:931px;" width="41" height="41" viewBox="0 0 41 41"><circle cx="20.5" cy="20.5" r="17" fill="none" stroke="#5FDDFF" stroke-width="3.2"/><rect x="18.7" y="17" width="3.6" height="12" fill="#5FDDFF"/><circle cx="20.5" cy="12.5" r="2.2" fill="#5FDDFF"/></svg>
<div id="sim_t" style="position:absolute;top:937px;font-family:'Liberation Sans', sans-serif;font-size:28px;line-height:28px;font-weight:700;color:#fff;white-space:nowrap;letter-spacing:0.050px;left:2111.00px;"><span style="font-weight:700;">Simulation successful</span></div>
<div id="sim_b" style="position:absolute;top:977px;font-family:'Liberation Sans', sans-serif;font-size:28px;line-height:28px;font-weight:400;color:#fff;white-space:nowrap;letter-spacing:0.304px;left:2109.00px;"><span style="font-weight:400;">Full simulation report is available </span><span style="font-weight:700;color:#5FDDFF;">on Tenderly</span></div>
<svg style="position:absolute;left:2705px;top:976px;" width="28" height="28" viewBox="0 0 28 28"><g fill="none" stroke="#5FDDFF" stroke-width="2.8" stroke-linecap="round" stroke-linejoin="round"><path d="M10 3.5 H3.5 V24.5 H24.5 V18"/><path d="M16 3.5 H24.5 V12"/><path d="M24 4 L12.5 15.5"/></g></svg>
<div id="sim_dot" style="position:absolute;top:977px;font-family:'Liberation Sans', sans-serif;font-size:28px;line-height:28px;font-weight:400;color:#fff;white-space:nowrap;letter-spacing:0.000px;left:2733.00px;"><span style="font-weight:400;">.</span></div>
</body></html>
